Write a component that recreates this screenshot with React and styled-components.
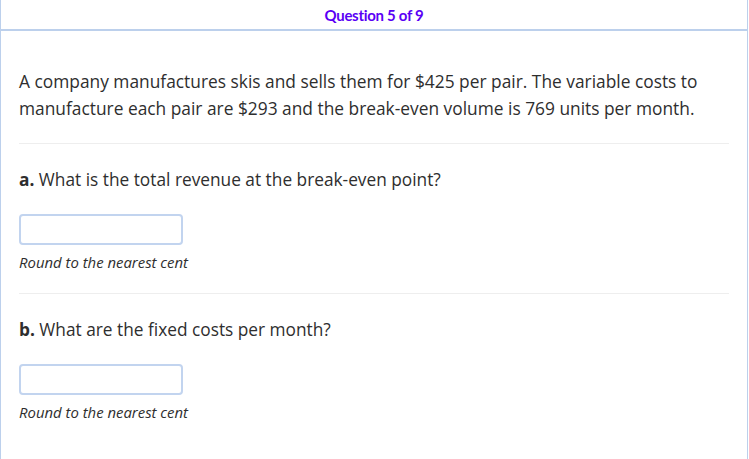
import React from "react";
import styled, { createGlobalStyle } from "styled-components";

const Global = createGlobalStyle`
  html, body { margin: 0; padding: 0; background: #fff; }
  body { font-family: "Open Sans", sans-serif; }
`;

const Frame = styled.div`
  width: 746px;
  height: 459px;
  border-left: 1px solid #bcd0ec;
  border-right: 1px solid #bcd0ec;
  box-sizing: content-box;
  display: flex;
  flex-direction: column;
`;

const Header = styled.div`
  height: 31px;
  border-bottom: 2px solid #bcd0ec;
  display: flex;
  align-items: center;
  justify-content: center;
  font-family: Lato, sans-serif;
  font-size: 15px;
  font-weight: 700;
  color: #5a00f5;
  letter-spacing: -0.3px;
  padding-top: 1px;
  box-sizing: border-box;
`;

const Body = styled.div`
  padding: 37px 18px 0 18px;
`;

const Para = styled.p`
  margin: 0;
  font-size: 17.35px;
  line-height: 27px;
  color: #2e2e2e;
`;

const Divider = styled.hr`
  border: none;
  border-top: 1px solid #eeeeee;
  margin: ${(p) => p.$top}px 0 0 0;
  width: 710px;
`;

const Part = styled.div`
  padding-top: 24px;
`;

const Prompt = styled.div`
  font-size: 17.3px;
  line-height: 24px;
  color: #2e2e2e;
  b { font-weight: 700; }
`;

const Input = styled.input`
  display: block;
  box-sizing: border-box;
  width: 164px;
  height: 31px;
  margin-top: 22px;
  border: 2px solid #c2d4ef;
  border-radius: 4px;
  background: #fff;
  outline: none;
`;

const Hint = styled.div`
  font-size: 14.9px;
  font-style: italic;
  color: #2e2e2e;
  margin-top: 7px;
  line-height: 20px;
`;

export default function App() {
  return (
    <>
      <Global />
      <Frame>
        <Header>Question 5 of 9</Header>
        <Body>
          <Para>
            A company manufactures skis and sells them for $425 per pair. The variable costs to
            manufacture each pair are $293 and the break-even volume is 769 units per month.
          </Para>
          <Divider $top={21} />
          <Part>
            <Prompt><b>a.</b> What is the total revenue at the break-even point?</Prompt>
            <Input type="text" />
            <Hint>Round to the nearest cent</Hint>
          </Part>
          <Divider $top={21} />
          <Part>
            <Prompt><b>b.</b> What are the fixed costs per month?</Prompt>
            <Input type="text" />
            <Hint>Round to the nearest cent</Hint>
          </Part>
        </Body>
      </Frame>
    </>
  );
}
